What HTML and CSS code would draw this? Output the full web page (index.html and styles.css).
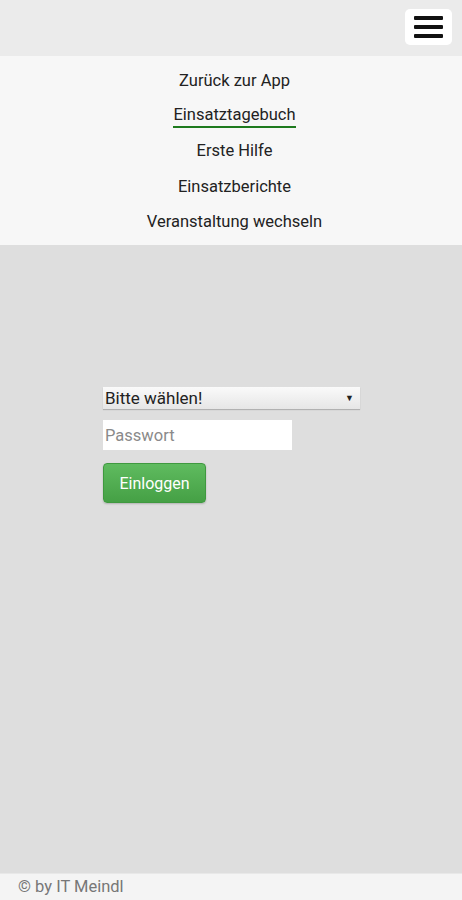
FILE: index.html
```html
<!DOCTYPE html>
<html lang="de">
<head>
    <meta charset="UTF-8">
    <meta name="viewport" content="width=device-width, initial-scale=1.0">
    <title>Einsatztagebuch</title>
    <link rel="stylesheet" href="styles.css">
</head>
<body>
    <!-- Top bar -->
    <div class="topBar">
        <button class="menuToggle" aria-label="Menü">
            <span></span><span></span><span></span>
        </button>
    </div>

    <!-- Navigation -->
    <nav class="mainNav">
        <a href="#">Zurück zur App</a>
        <a href="#" class="active">Einsatztagebuch</a>
        <a href="#">Erste Hilfe</a>
        <a href="#">Einsatzberichte</a>
        <a href="#">Veranstaltung wechseln</a>
    </nav>

    <!-- Login -->
    <main class="content">
        <form class="loginForm">
            <div class="selectBox">
                <span>Bitte wählen!</span>
                <span class="arrow">&#9660;</span>
            </div>
            <input type="password" class="passwordField" placeholder="Passwort">
            <button type="button" class="loginButton">Einloggen</button>
        </form>
    </main>

    <footer class="footer">© by IT Meindl</footer>
</body>
</html>
```

FILE: styles.css
```css
body {
    margin: 0;
    font-family: Roboto, "Liberation Sans", Arial, sans-serif;
    background-color: #dedede;
    display: flex;
    flex-direction: column;
    min-height: 900px;
}

.topBar {
    height: 56px;
    background-color: #ebebeb;
    display: flex;
    justify-content: flex-end;
    align-items: center;
    padding-right: 10px;
    box-sizing: border-box;
}

.menuToggle {
    width: 47px;
    height: 36px;
    margin-top: -2px;
    background-color: #ffffff;
    border: none;
    border-radius: 5px;
    display: flex;
    flex-direction: column;
    align-items: center;
    justify-content: center;
    gap: 5px;
    padding: 0;
}

.menuToggle span {
    display: block;
    width: 29px;
    height: 4px;
    background-color: #111;
    border-radius: 1px;
}

.mainNav {
    background-color: #f7f7f7;
    display: flex;
    flex-direction: column;
    align-items: center;
    padding-top: 10px;
    padding-left: 7px;
    height: 189px;
    box-sizing: border-box;
}

.mainNav a {
    color: #222;
    text-decoration: none;
    font-size: 16.5px;
    line-height: 20px;
    padding-top: 5px;
    height: 35.3px;
    box-sizing: border-box;
    display: block;
}

.mainNav a.active {
    border-bottom: 2px solid #1e7a1e;
    padding: 4px 0 1px;
    margin-bottom: 8px;
    height: auto;
}

.content {
    flex: 1;
    padding-top: 142px;
}

.loginForm {
    width: 257px;
    margin-left: 103px;
    display: flex;
    flex-direction: column;
    align-items: flex-start;
}

.selectBox {
    width: 257px;
    height: 22px;
    box-sizing: border-box;
    background: linear-gradient(#fafafa, #e6e6e6);
    box-shadow: 0 1px 1px rgba(0, 0, 0, 0.2);
    display: flex;
    justify-content: space-between;
    align-items: center;
    padding: 0 6px 0 2px;
    font-size: 17px;
    color: #222;
}

.selectBox .arrow {
    font-size: 9px;
}

.passwordField {
    margin-top: 11px;
    width: 189px;
    height: 30px;
    box-sizing: border-box;
    border: none;
    background-color: #fff;
    font-family: inherit;
    font-size: 16.5px;
    padding: 0 2px;
    outline: none;
}

.passwordField::placeholder {
    color: #8a8a8a;
}

.loginButton {
    margin-top: 13px;
    width: 103px;
    height: 40px;
    border: 1px solid #3f993f;
    border-radius: 4px;
    background: linear-gradient(#5fbb5f, #45a045);
    color: #fff;
    font-family: inherit;
    font-size: 16px;
    box-shadow: 0 1px 2px rgba(0, 0, 0, 0.2);
}

.footer {
    height: 27px;
    background-color: #f4f4f4;
    border-top: 1px solid #e8e8e8;
    color: #777;
    font-size: 16.5px;
    line-height: 26px;
    padding-left: 18px;
    box-sizing: border-box;
}
```
